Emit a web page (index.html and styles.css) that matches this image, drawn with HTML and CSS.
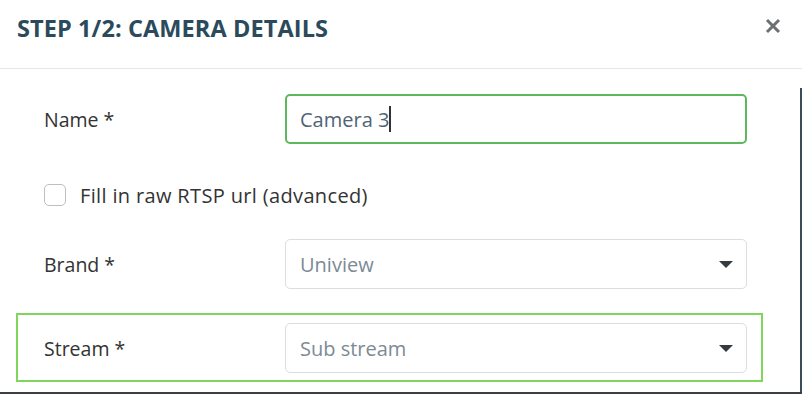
FILE: index.html
```html
<!DOCTYPE html>
<html>
<head>
<meta charset="utf-8">
<link rel="stylesheet" href="styles.css">
</head>
<body>
<div class="modal">
  <div class="modal-header">
    <h2 class="modal-title">STEP 1/2: CAMERA DETAILS</h2>
    <span class="close" aria-label="Close"><svg width="16" height="16" viewBox="0 0 16 16"><path d="M2 2 L14 14 M14 2 L2 14" stroke="#6d7073" stroke-width="3" stroke-linecap="butt" fill="none"/></svg></span>
  </div>
  <div class="modal-main">
    <form class="form">
      <div class="row row-name">
        <label class="label">Name *</label>
        <div class="input input-active"><span class="value">Camera 3</span><span class="caret"></span></div>
      </div>
      <div class="check-row">
        <span class="checkbox"></span>
        <span class="check-label">Fill in raw RTSP url (advanced)</span>
      </div>
      <div class="row row-brand">
        <label class="label">Brand *</label>
        <div class="input select"><span class="value muted">Uniview</span><span class="arrow"></span></div>
      </div>
      <div class="highlight">
        <div class="row">
          <label class="label">Stream *</label>
          <div class="input select"><span class="value muted">Sub stream</span><span class="arrow"></span></div>
        </div>
      </div>
    </form>
    <div class="scroll-edge"></div>
  </div>
</div>
</body>
</html>
```

FILE: styles.css
```css
* { box-sizing: border-box; }
html, body { margin: 0; padding: 0; background: #fff; }
body { font-family: "Open Sans", "Liberation Sans", sans-serif; }

.modal {
  width: 802px;
  height: 394px;
  display: flex;
  flex-direction: column;
  border-bottom: 2px solid #3a3f44;
  overflow: hidden;
}

.modal-header {
  height: 69px;
  flex: none;
  display: flex;
  align-items: flex-start;
  justify-content: space-between;
  border-bottom: 1px solid #e3e8ee;
  padding: 12px 21px 0 17px;
}
.modal-title {
  margin: 0;
  font-size: 23.5px;
  font-weight: 700;
  color: #2b4a5c;
  line-height: 32px;
  letter-spacing: 0.1px;
}
.close {
  display: flex;
  padding-top: 6px;
}

.modal-main {
  flex: 1;
  display: flex;
}
.form {
  flex: 1;
  padding: 25px 0 0 16px;
}
.scroll-edge {
  width: 2px;
  margin-top: 19px;
  background: #3d4d58;
}

.row {
  display: grid;
  grid-template-columns: 241px 462px;
  align-items: center;
  padding-left: 28px;
}
.label {
  font-size: 19.5px;
  color: #333;
}
.input {
  height: 50px;
  border: 1px solid #d9dee3;
  border-radius: 5px;
  display: flex;
  align-items: center;
  padding: 0 14px;
  font-size: 20px;
  color: #4f6474;
}
.input-active {
  border: 2px solid #5cb85c;
  padding-left: 13px;
}
.caret {
  width: 1.5px;
  height: 26px;
  background: #333;
}
.muted { color: #7d8a95; }
.select { justify-content: space-between; }
.arrow {
  width: 0;
  height: 0;
  border-left: 7px solid transparent;
  border-right: 7px solid transparent;
  border-top: 7px solid #343a40;
  margin-right: -1px;
}

.check-row {
  display: flex;
  align-items: center;
  margin-top: 40px;
  padding-left: 28px;
  height: 22px;
}
.checkbox {
  width: 22px;
  height: 22px;
  border: 1px solid #b9c0c7;
  border-radius: 5px;
  margin-right: 14px;
}
.check-label {
  font-size: 20px;
  letter-spacing: 0.35px;
  color: #333;
}

.row-brand { margin-top: 33px; }

.highlight {
  margin-top: 24px;
  width: 747px;
  border: 2px solid #7fd65a;
  padding: 8px 0 7px 0;
}
.highlight .row { padding-left: 26px; }
```
